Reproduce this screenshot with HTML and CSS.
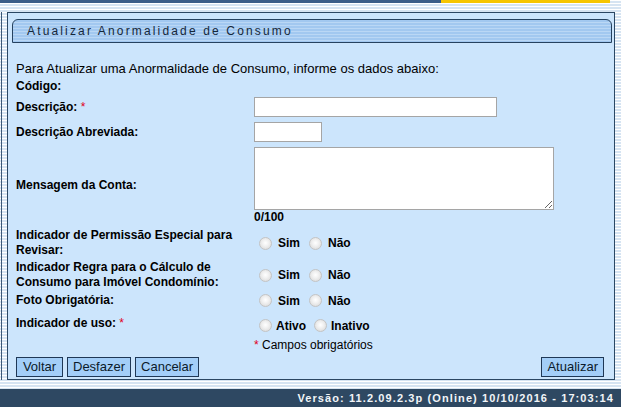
FILE: index.html
```html
<!DOCTYPE html>
<html>
<head>
<meta charset="utf-8">
<link rel="stylesheet" href="styles.css">
</head>
<body>
<div class="topline"><span class="tl-blue"></span><span class="tl-yellow"></span></div>
<div class="frame">
  <div class="leftstrip"></div>
  <div class="panel">
    <div class="titlebar">Atualizar Anormalidade de Consumo</div>
    <div class="form">
      <div class="intro">Para Atualizar uma Anormalidade de Consumo, informe os dados abaixo:</div>
      <div class="row r-codigo"><div class="lbl">Código:</div><div class="fld"></div></div>
      <div class="row r-desc"><div class="lbl">Descrição: <span class="req">*</span></div><div class="fld"><input class="inp inp-desc" type="text"></div></div>
      <div class="row r-abrev"><div class="lbl">Descrição Abreviada:</div><div class="fld"><input class="inp inp-abrev" type="text"></div></div>
      <div class="row r-msg"><div class="lbl">Mensagem da Conta:</div><div class="fld col"><textarea class="ta"></textarea><div class="count">0/100</div></div></div>
      <div class="row r-perm"><div class="lbl">Indicador de Permissão Especial para<br>Revisar:</div><div class="fld"><label class="opt"><input type="radio" name="a"><span>Sim</span></label><label class="opt"><input type="radio" name="a"><span>Não</span></label></div></div>
      <div class="row r-regra"><div class="lbl">Indicador Regra para o Cálculo de<br>Consumo para Imóvel Condomínio:</div><div class="fld"><label class="opt"><input type="radio" name="b"><span>Sim</span></label><label class="opt"><input type="radio" name="b"><span>Não</span></label></div></div>
      <div class="row r-foto"><div class="lbl">Foto Obrigatória:</div><div class="fld"><label class="opt"><input type="radio" name="c"><span>Sim</span></label><label class="opt"><input type="radio" name="c"><span>Não</span></label></div></div>
      <div class="row r-uso"><div class="lbl">Indicador de uso: <span class="req">*</span></div><div class="fld low"><label class="opt tight"><input type="radio" name="d"><span>Ativo</span></label><label class="opt tight"><input type="radio" name="d"><span>Inativo</span></label></div></div>
      <div class="row r-campos"><div class="lbl"></div><div class="note"><span class="req">*</span> Campos obrigatórios</div></div>
    </div>
    <div class="buttons">
      <div class="btn-group">
        <button class="btn">Voltar</button>
        <button class="btn">Desfazer</button>
        <button class="btn">Cancelar</button>
      </div>
      <button class="btn">Atualizar</button>
    </div>
  </div>
  <div class="rightstrip"></div>
</div>
<div class="gap-stripes"></div>
<div class="footer">Versão: 11.2.09.2.3p (Online) 10/10/2016 - 17:03:14</div>
</body>
</html>
```
FILE: styles.css
```css
html, body {
  margin: 0;
  padding: 0;
}
body {
  width: 621px;
  height: 407px;
  overflow: hidden;
  font-family: "Liberation Sans", Arial, sans-serif;
  font-size: 12px;
  color: #000;
  background: repeating-linear-gradient(to bottom, #ffffff 0px, #ffffff 1px, #d6e4f2 1px, #d6e4f2 3px);
}
.topline {
  display: flex;
  height: 3px;
}
.tl-blue {
  width: 441px;
  background: #3a5d88;
}
.tl-yellow {
  width: 169px;
  background: #f6c500;
}
.frame {
  display: flex;
  margin-top: 9px;
  height: 368px;
}
.leftstrip {
  width: 7px;
  background: linear-gradient(to right, transparent 1px, #3c5877 1px, #3c5877 2px, transparent 2px);
}
.rightstrip {
  width: 6px;
}
.panel {
  width: 608px;
  box-sizing: border-box;
  border: 1px solid #2b4763;
  background: #cce5fc;
  padding: 6px 2px 2px 4px;
  display: flex;
  flex-direction: column;
}
.titlebar {
  height: 22px;
  line-height: 23px;
  border: 1px solid #26425f;
  border-radius: 6px 6px 0 0;
  background: repeating-linear-gradient(to bottom, #a2c8f0 0px, #a2c8f0 2px, #bad7f5 2px, #bad7f5 3px);
  padding-left: 14px;
  font-size: 12px;
  letter-spacing: 2.15px;
  color: #15273a;
}
.form {
  padding: 18px 0 0 4px;
  flex: 1;
}
.intro {
  font-size: 13px;
  line-height: 15px;
  height: 15px;
}
.row {
  display: flex;
  align-items: center;
}
.lbl {
  width: 238px;
  flex: none;
  font-weight: bold;
  line-height: 15px;
}
.fld {
  display: flex;
  align-items: center;
}
.fld.col {
  flex-direction: column;
  align-items: flex-start;
}
.req {
  color: #e0001a;
  font-weight: normal;
}
.r-codigo { margin-top: 3px; height: 15px; }
.r-desc { margin-top: 3px; height: 20px; }
.r-abrev { margin-top: 5px; height: 20px; }
.r-msg { margin-top: 5px; height: 77px; }
.r-perm { margin-top: 4px; height: 30px; }
.r-regra { margin-top: 2px; height: 30px; }
.r-foto { margin-top: 3px; height: 15px; }
.r-uso { margin-top: 8px; height: 15px; }
.r-campos { margin-top: 7px; height: 15px; }
.inp {
  box-sizing: border-box;
  height: 20px;
  border: 1px solid #a5a5a5;
  background: #fff;
  margin: 0;
  padding: 1px 2px;
  font-family: "Liberation Sans", Arial, sans-serif;
  font-size: 12px;
}
.inp-desc { width: 243px; }
.inp-abrev { width: 68px; }
.ta {
  box-sizing: border-box;
  width: 300px;
  height: 63px;
  border: 1px solid #a5a5a5;
  background: #fff;
  margin: 0;
  padding: 2px;
  display: block;
}
.count {
  font-weight: bold;
  line-height: 14px;
  height: 14px;
}
.opt {
  display: flex;
  align-items: center;
  font-weight: bold;
  margin-right: 4px;
}
.opt input {
  -webkit-appearance: none;
  appearance: none;
  width: 13px;
  height: 13px;
  margin: 0 6px 0 5px;
  border-radius: 50%;
  border: 1px solid #c4c4c4;
  background: radial-gradient(circle at 50% 45%, #ffffff 0%, #f0f0f0 40%, #d4d4d4 100%);
  box-sizing: border-box;
}
.opt.tight {
  margin-right: 3px;
}
.opt.tight input {
  margin-right: 4px;
}
.fld.low {
  margin-top: 4px;
}
.note {
  line-height: 15px;
}
.buttons {
  display: flex;
  justify-content: space-between;
  margin-top: 4px;
  padding: 0 8px 0 4px;
}
.btn-group {
  display: flex;
  gap: 4px;
}
.btn {
  height: 20px;
  min-width: 47px;
  box-sizing: border-box;
  border: 1px solid #1f3856;
  background: #a3cef8;
  font-family: "Liberation Sans", Arial, sans-serif;
  font-size: 13px;
  color: #0b1a2a;
  padding: 0 5px;
  margin: 0;
  line-height: 18px;
}
.gap-stripes {
  height: 9px;
}
.footer {
  height: 18px;
  background: #2e4862;
  color: #f2f5f8;
  font-weight: bold;
  font-size: 11px;
  line-height: 18px;
  letter-spacing: 1.1px;
  text-align: right;
  padding-right: 7px;
}
```
